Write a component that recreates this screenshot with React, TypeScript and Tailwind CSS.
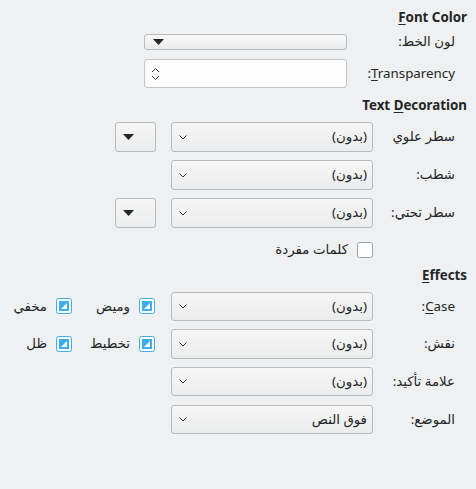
import type { ReactNode } from "react";

// ---------------------------------------------------------------------------
// Font effects page (RTL) – small widget set in a KDE Breeze-like style
// ---------------------------------------------------------------------------

const NONE = "(بدون)";

function Chevron() {
  return (
    <svg width="8" height="5" viewBox="0 0 8 5" className="shrink-0">
      <path d="M0.5 0.5 L4 4 L7.5 0.5" fill="none" stroke="#31363b" strokeWidth="1" />
    </svg>
  );
}

function DownTriangle() {
  return (
    <svg width="11" height="6" viewBox="0 0 11 6" className="shrink-0">
      <polygon points="0,0 11,0 5.5,6" fill="#232627" />
    </svg>
  );
}

function Combo({ value }: { value: string }) {
  return (
    <div className="w-[202px] h-full flex items-center justify-between rounded-[3px] border border-[#b9babb] bg-linear-to-b from-[#f6f6f6] to-[#ebeced] pr-[5px] pl-[7px]">
      <span>{value}</span>
      <Chevron />
    </div>
  );
}

function ColorButton() {
  return (
    <div className="w-[41px] h-full flex items-center justify-end pl-[7px] pr-0 rounded-[3px] border border-[#b9babb] bg-linear-to-b from-[#f6f6f6] to-[#ebeced]">
      <DownTriangle />
    </div>
  );
}

function Check({ checked, label }: { checked?: boolean; label: string }) {
  return (
    <div className="flex items-center gap-[9px]">
      {checked ? (
        <svg width="16" height="16" viewBox="0 0 16 16" className="shrink-0">
          <rect x="0.5" y="0.5" width="15" height="15" rx="2" fill="#fcfcfc" stroke="#3daee9" />
          <rect x="3" y="3" width="10" height="10" fill="#3daee9" />
          <polygon points="5,11 11,11 11,5" fill="#fcfcfc" />
        </svg>
      ) : (
        <svg width="16" height="16" viewBox="0 0 16 16" className="shrink-0">
          <rect x="0.5" y="0.5" width="15" height="15" rx="2" fill="#fcfcfc" stroke="#9fa1a3" />
        </svg>
      )}
      <span className="whitespace-nowrap">{label}</span>
    </div>
  );
}

function Heading({ children, className }: { children: ReactNode; className?: string }) {
  return <div className={`h-[16px] leading-[16px] font-bold ${className ?? ""}`}>{children}</div>;
}

function Row({ label, children, className }: { label: ReactNode; children: ReactNode; className?: string }) {
  return (
    <div className={`flex items-center ${className ?? ""}`}>
      <div className="w-[82px] shrink-0 whitespace-nowrap">{label}</div>
      {children}
    </div>
  );
}

// Latin label inside the RTL page: colon sits on the left, one letter is the mnemonic
function Mnemonic({ first, rest }: { first: string; rest: string }) {
  return (
    <span dir="ltr">
      :<span className="underline underline-offset-2">{first}</span>
      {rest}
    </span>
  );
}

export default function App() {
  return (
    <div
      dir="rtl"
      className="w-[476px] h-[489px] bg-[#eff0f1] text-[#232627] text-[13.33px] pt-[9px] pr-[9px] overflow-hidden"
      style={{ fontFamily: '"Noto Sans", "DejaVu Sans", sans-serif' }}
    >
      {/* Font color */}
      <Heading>
        <span dir="ltr">
          <span className="underline underline-offset-2">F</span>ont Color
        </span>
      </Heading>
      <div className="pr-[12px]">
        <div className="flex items-center h-[16px] mt-[9px]">
          <div className="w-[108px] shrink-0">لون الخط:</div>
          <div className="w-[203px] h-full flex items-center justify-end pl-[8px] rounded-[3px] border border-[#b9babb] bg-linear-to-b from-[#f8f8f8] to-[#ebeced]">
            <DownTriangle />
          </div>
        </div>
        <div className="flex items-center h-[29px] mt-[9px]">
          <div className="w-[108px] shrink-0">
            <Mnemonic first="T" rest="ransparency" />
          </div>
          <div className="w-[203px] h-full flex items-center justify-end pl-[6px] rounded-[3px] border border-[#c3c4c5] bg-[#fcfcfc]">
            <svg width="9" height="16" viewBox="0 0 9 16">
              <path d="M1 6 L4.5 2.5 L8 6" fill="none" stroke="#31363b" strokeWidth="1" />
              <path d="M1 10 L4.5 13.5 L8 10" fill="none" stroke="#31363b" strokeWidth="1" />
            </svg>
          </div>
        </div>
      </div>

      {/* Text decoration */}
      <Heading className="mt-[9px]">
        <span dir="ltr">
          Text <span className="underline underline-offset-2">D</span>ecoration
        </span>
      </Heading>
      <div className="pr-[12px]">
        <Row label="سطر علوي" className="h-[30px] mt-[9px]">
          <Combo value={NONE} />
          <div className="w-[15px]" />
          <ColorButton />
        </Row>
        <Row label="شطب:" className="h-[30px] mt-[8px]">
          <Combo value={NONE} />
        </Row>
        <Row label="سطر تحتي:" className="h-[30px] mt-[8px]">
          <Combo value={NONE} />
          <div className="w-[15px]" />
          <ColorButton />
        </Row>
        <div className="h-[16px] mt-[12px] pr-[82px]">
          <Check label="كلمات مفردة" />
        </div>
      </div>

      {/* Effects */}
      <Heading className="mt-[11px]">
        <span dir="ltr">
          <span className="underline underline-offset-2">E</span>ffects
        </span>
      </Heading>
      <div className="pr-[12px]">
        <Row label={<Mnemonic first="C" rest="ase" />} className="h-[29px] mt-[9px]">
          <Combo value={NONE} />
          <div className="w-[16px]" />
          <div className="grid grid-cols-[65px_auto] gap-x-[18px]">
            <Check checked label="وميض" />
            <Check checked label="مخفي" />
          </div>
        </Row>
        <Row label="نقش:" className="h-[30px] mt-[8px]">
          <Combo value={NONE} />
          <div className="w-[16px]" />
          <div className="grid grid-cols-[65px_auto] gap-x-[18px]">
            <Check checked label="تخطيط" />
            <Check checked label="ظل" />
          </div>
        </Row>
        <Row label="علامة تأكيد:" className="h-[29px] mt-[8px]">
          <Combo value={NONE} />
        </Row>
        <Row label="الموضع:" className="h-[29px] mt-[9px]">
          <Combo value="فوق النص" />
        </Row>
      </div>
    </div>
  );
}
